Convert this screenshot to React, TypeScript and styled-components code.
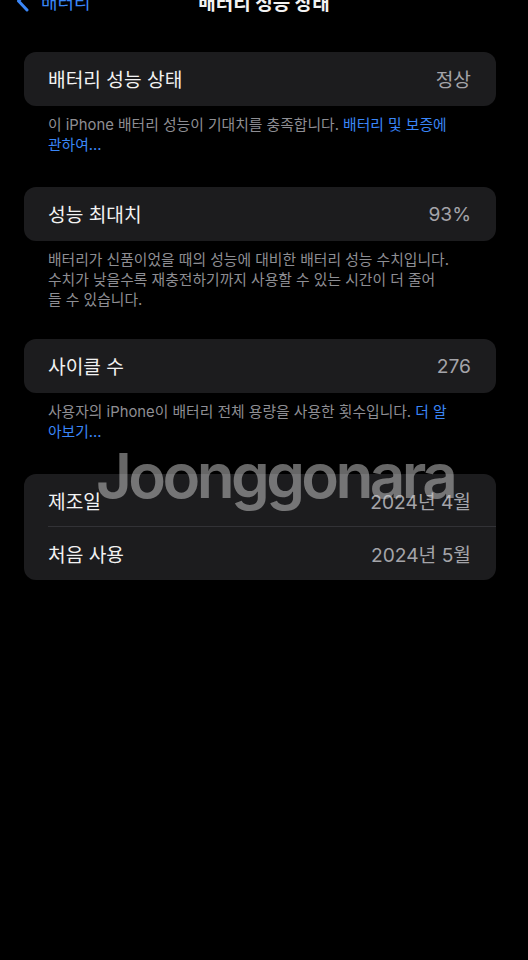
import React from "react";
import styled, { createGlobalStyle } from "styled-components";

const Global = createGlobalStyle`
  html, body { margin: 0; padding: 0; background: #000; }
  body {
    font-family: Inter, "Noto Sans CJK KR", "Noto Sans", sans-serif;
    -webkit-font-smoothing: antialiased;
  }
`;

const Page = styled.div`
  position: relative;
  width: 528px;
  min-height: 960px;
  background: #000;
  overflow: hidden;
`;

const NavBar = styled.div`
  position: relative;
  height: 44px;
  margin-top: -21px;
  display: flex;
  align-items: center;
  padding: 0 16px;
`;

const BackButton = styled.div`
  display: flex;
  align-items: center;
  gap: 12px;
  color: #3a86f7;
  font-size: 18px;
`;

const Title = styled.div`
  position: absolute;
  left: 0;
  right: 0;
  text-align: center;
  color: #f2f2f2;
  font-size: 19px;
  font-weight: 700;
  pointer-events: none;
`;

const Content = styled.div`
  display: flex;
  flex-direction: column;
  padding: 29px 32px 0 24px;
`;

const Section = styled.div<{ $gap?: number }>`
  display: flex;
  flex-direction: column;
  margin-bottom: ${(p) => p.$gap ?? 32}px;
`;

const Card = styled.div`
  background: #1c1c1e;
  border-radius: 12px;
  overflow: hidden;
`;

const Row = styled.div<{ $divider?: boolean }>`
  position: relative;
  height: 53px;
  display: flex;
  align-items: center;
  justify-content: space-between;
  padding: 0 25px 0 24px;
  ${(p) =>
    p.$divider &&
    `
    &::after {
      content: "";
      position: absolute;
      left: 24px;
      right: 0;
      bottom: 0;
      height: 1px;
      background: #323236;
    }
  `}
`;

const SingleRow = styled(Row)`
  height: 54px;
`;

const Label = styled.span`
  color: #f2f2f2;
  font-size: 19.2px;
`;

const Value = styled.span`
  color: #a4a4a9;
  font-size: 19.2px;
`;

const Footer = styled.p`
  margin: 0;
  padding: 9px 24px 0 24px;
  color: #8e8e93;
  font-size: 14.8px;
  line-height: 20px;
  white-space: nowrap;
`;

const Link = styled.span`
  color: #3a86f7;
`;

const Watermark = styled.div`
  position: absolute;
  left: 96px;
  top: 445px;
  font-family: Inter, "Noto Sans", sans-serif;
  font-size: 62px;
  line-height: 62px;
  font-weight: 600;
  letter-spacing: -3.6px;
  color: rgba(205, 205, 205, 0.5);
  pointer-events: none;
  user-select: none;
`;

const Chevron = () => (
  <svg width="13" height="22" viewBox="0 0 13 22" fill="none">
    <path
      d="M11 2 L2.5 11 L11 20"
      stroke="#3a86f7"
      strokeWidth="3"
      strokeLinecap="round"
      strokeLinejoin="round"
    />
  </svg>
);

export default function App() {
  return (
    <Page>
      <Global />
      <NavBar>
        <BackButton>
          <Chevron />
          <span>배터리</span>
        </BackButton>
        <Title>배터리 성능 상태</Title>
      </NavBar>
      <Content>
        <Section>
          <Card>
            <SingleRow>
              <Label>배터리 성능 상태</Label>
              <Value>정상</Value>
            </SingleRow>
          </Card>
          <Footer>
            이 iPhone 배터리 성능이 기대치를 충족합니다. <Link>배터리 및 보증에</Link>
            <br />
            <Link>관하여...</Link>
          </Footer>
        </Section>
        <Section $gap={29}>
          <Card>
            <SingleRow>
              <Label>성능 최대치</Label>
              <Value>93%</Value>
            </SingleRow>
          </Card>
          <Footer>
            배터리가 신품이었을 때의 성능에 대비한 배터리 성능 수치입니다.
            <br />
            수치가 낮을수록 재충전하기까지 사용할 수 있는 시간이 더 줄어
            <br />
            들 수 있습니다.
          </Footer>
        </Section>
        <Section>
          <Card>
            <SingleRow>
              <Label>사이클 수</Label>
              <Value>276</Value>
            </SingleRow>
          </Card>
          <Footer>
            사용자의 iPhone이 배터리 전체 용량을 사용한 횟수입니다. <Link>더 알</Link>
            <br />
            <Link>아보기...</Link>
          </Footer>
        </Section>
        <Section>
          <Card>
            <Row $divider>
              <Label>제조일</Label>
              <Value>2024년 4월</Value>
            </Row>
            <Row>
              <Label>처음 사용</Label>
              <Value>2024년 5월</Value>
            </Row>
          </Card>
        </Section>
      </Content>
      <Watermark>Joonggonara</Watermark>
    </Page>
  );
}
